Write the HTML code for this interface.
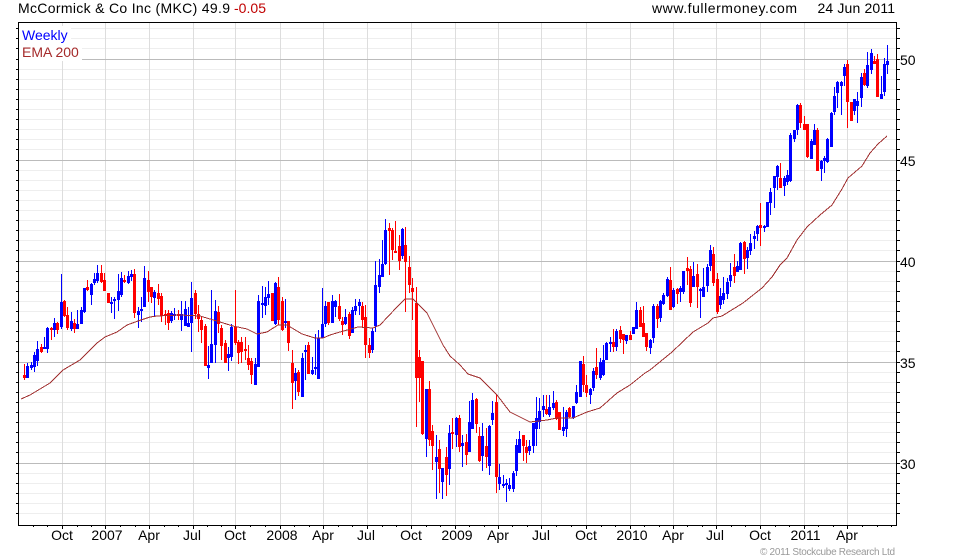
<!DOCTYPE html>
<html><head><meta charset="utf-8"><style>
html,body{margin:0;padding:0;background:#fff;width:980px;height:560px;overflow:hidden}
svg{display:block}
text{font-family:"Liberation Sans",Arial,sans-serif;font-size:14px;fill:#000}
</style></head><body>
<svg width="980" height="560" viewBox="0 0 980 560" xmlns="http://www.w3.org/2000/svg">
<rect width="980" height="560" fill="#fff"/>
<g shape-rendering="crispEdges" fill="none">
<path stroke="#eee" d="M19 28.5H896M19 38.5H896M19 48.5H896M19 69.5H896M19 79.5H896M19 89.5H896M19 99.5H896M19 109.5H896M19 119.5H896M19 129.5H896M19 139.5H896M19 149.5H896M19 170.5H896M19 180.5H896M19 190.5H896M19 200.5H896M19 210.5H896M19 220.5H896M19 230.5H896M19 240.5H896M19 250.5H896M19 271.5H896M19 281.5H896M19 291.5H896M19 301.5H896M19 311.5H896M19 321.5H896M19 331.5H896M19 341.5H896M19 351.5H896M19 372.5H896M19 382.5H896M19 392.5H896M19 402.5H896M19 412.5H896M19 422.5H896M19 432.5H896M19 442.5H896M19 452.5H896M19 473.5H896M19 483.5H896M19 493.5H896M19 503.5H896M19 513.5H896"/>
<path stroke="#ddd" d="M62.5 23V525M105.5 23V525M149.5 23V525M193.5 23V525M235.5 23V525M280.5 23V525M323.5 23V525M367.5 23V525M411.5 23V525M455.5 23V525M498.5 23V525M541.5 23V525M586.5 23V525M630.5 23V525M673.5 23V525M716.5 23V525M760.5 23V525M804.5 23V525M847.5 23V525"/>
<path stroke="#bbb" d="M19 59.5H896M19 160.5H896M19 261.5H896M19 362.5H896M19 463.5H896"/>
<path stroke="#000" d="M18.5 22V526M896.5 22V526M18 22.5H897M18 525.5H897"/>
<path stroke="#000" d="M16 28.5H18M16 38.5H18M16 48.5H18M16 59.5H18M16 69.5H18M16 79.5H18M16 89.5H18M16 99.5H18M16 109.5H18M16 119.5H18M16 129.5H18M16 139.5H18M16 149.5H18M16 160.5H18M16 170.5H18M16 180.5H18M16 190.5H18M16 200.5H18M16 210.5H18M16 220.5H18M16 230.5H18M16 240.5H18M16 250.5H18M16 261.5H18M16 271.5H18M16 281.5H18M16 291.5H18M16 301.5H18M16 311.5H18M16 321.5H18M16 331.5H18M16 341.5H18M16 351.5H18M16 362.5H18M16 372.5H18M16 382.5H18M16 392.5H18M16 402.5H18M16 412.5H18M16 422.5H18M16 432.5H18M16 442.5H18M16 452.5H18M16 463.5H18M16 473.5H18M16 483.5H18M16 493.5H18M16 503.5H18M16 513.5H18"/>
<path stroke="#000" d="M897 28.5H900M897 38.5H900M897 48.5H900M897 59.5H900M897 69.5H900M897 79.5H900M897 89.5H900M897 99.5H900M897 109.5H900M897 119.5H900M897 129.5H900M897 139.5H900M897 149.5H900M897 160.5H900M897 170.5H900M897 180.5H900M897 190.5H900M897 200.5H900M897 210.5H900M897 220.5H900M897 230.5H900M897 240.5H900M897 250.5H900M897 261.5H900M897 271.5H900M897 281.5H900M897 291.5H900M897 301.5H900M897 311.5H900M897 321.5H900M897 331.5H900M897 341.5H900M897 351.5H900M897 362.5H900M897 372.5H900M897 382.5H900M897 392.5H900M897 402.5H900M897 412.5H900M897 422.5H900M897 432.5H900M897 442.5H900M897 452.5H900M897 463.5H900M897 473.5H900M897 483.5H900M897 493.5H900M897 503.5H900M897 513.5H900"/>
<path stroke="#000" d="M62.5 526V529M105.5 526V529M149.5 526V529M193.5 526V529M235.5 526V529M280.5 526V529M323.5 526V529M367.5 526V529M411.5 526V529M455.5 526V529M498.5 526V529M541.5 526V529M586.5 526V529M630.5 526V529M673.5 526V529M716.5 526V529M760.5 526V529M804.5 526V529M847.5 526V529"/>
<path stroke="#000" d="M33.5 526V527M47.5 526V527M77.5 526V527M91.5 526V527M120.5 526V527M135.5 526V527M164.5 526V527M178.5 526V527M207.5 526V527M221.5 526V527M250.5 526V527M265.5 526V527M294.5 526V527M309.5 526V527M338.5 526V527M352.5 526V527M382.5 526V527M396.5 526V527M426.5 526V527M440.5 526V527M469.5 526V527M484.5 526V527M512.5 526V527M527.5 526V527M556.5 526V527M571.5 526V527M601.5 526V527M615.5 526V527M644.5 526V527M659.5 526V527M687.5 526V527M702.5 526V527M731.5 526V527M745.5 526V527M775.5 526V527M789.5 526V527M818.5 526V527M833.5 526V527M862.5 526V527M877.5 526V527M891.5 526V527"/>
<rect x="19" y="26" width="52" height="18" fill="#fff" stroke="none"/>
<rect x="19" y="44" width="63" height="17" fill="#fff" stroke="none"/>

<path stroke="#f00" stroke-width="1" d="M24.5 364V380M41.5 344V353M51.5 327V340M57.5 322V334M64.5 300V317M67.5 307V330M74.5 319V333M87.5 280V291M101.5 265V283M104.5 273V291M108.5 293V303M124.5 275V283M134.5 269V318M148.5 271V302M151.5 287V303M158.5 284V305M161.5 293V322M165.5 310V325M168.5 310V330M178.5 310V320M195.5 290V319M198.5 305V332M201.5 316V343M205.5 324V366M218.5 306V333M221.5 325V360M225.5 340V363M235.5 290V345M238.5 340V364M241.5 337V363M245.5 337V360M248.5 345V370M251.5 358V384M272.5 297V321M278.5 277V325M282.5 297V331M288.5 321V351M292.5 350V409M298.5 370V396M308.5 342V374M328.5 302V325M339.5 294V321M342.5 317V335M349.5 312V339M362.5 302V328M365.5 305V358M369.5 338V358M389.5 223V275M392.5 228V260M395.5 221V253M399.5 235V270M405.5 227V312M409.5 256V293M412.5 278V320M416.5 287V427M419.5 350V402M422.5 361V435M429.5 381V446M432.5 425V470M439.5 440V493M446.5 447V496M452.5 418V449M459.5 415V452M466.5 434V465M476.5 398V433M479.5 427V462M486.5 428V468M496.5 394V493M523.5 435V461M526.5 440V463M546.5 395V415M556.5 400V420M559.5 412V430M569.5 407V418M583.5 356V392M586.5 375V397M596.5 348V379M613.5 329V352M620.5 326V343M623.5 334V354M630.5 331V340M640.5 307V327M643.5 306V337M646.5 333V351M657.5 304V328M670.5 267V310M677.5 288V304M687.5 257V285M690.5 266V307M697.5 264V308M713.5 247V286M717.5 273V314M734.5 254V283M744.5 241V274M760.5 203V246M780.5 163V188M800.5 103V128M804.5 116V130M807.5 124V158M817.5 128V171M847.5 60V128M851.5 102V121M864.5 69V86M874.5 56V64M877.5 54V97"/>
<path stroke="#f00" stroke-width="3" d="M24.5 375V378M41.5 347V352M51.5 328V330M57.5 323V330M64.5 301V316M67.5 315V328M74.5 323V329M87.5 287V290M101.5 273V282M104.5 280V291M108.5 293V303M124.5 280V282M134.5 274V313M148.5 280V292M151.5 287V297M158.5 293V299M161.5 296V316M165.5 314V316M168.5 313V323M178.5 314V316M195.5 293V314M198.5 314V319M201.5 320V330M205.5 326V366M218.5 312V324M221.5 328V346M225.5 343V363M235.5 327V343M238.5 342V353M241.5 342V352M245.5 349V351M248.5 358V365M251.5 361V375M272.5 293V321M278.5 287V320M282.5 301V330M288.5 321V343M292.5 363V383M298.5 372V392M308.5 345V374M328.5 302V323M339.5 306V319M342.5 321V325M349.5 314V336M362.5 306V320M365.5 317V345M369.5 345V353M389.5 228V231M392.5 230V250M395.5 251V253M399.5 246V261M405.5 245V262M409.5 267V285M412.5 288V292M416.5 303V378M419.5 357V378M422.5 361V434M429.5 389V440M432.5 431V446M439.5 449V469M446.5 457V475M452.5 432V434M459.5 418V447M466.5 442V455M476.5 399V424M479.5 436V461M486.5 446V457M496.5 402V477M523.5 435V446M526.5 447V453M546.5 409V414M556.5 402V419M559.5 412V430M569.5 408V417M583.5 364V385M586.5 385V393M596.5 367V375M613.5 342V347M620.5 330V339M623.5 334V340M630.5 335V340M640.5 310V327M643.5 323V337M646.5 333V347M657.5 306V319M670.5 280V310M677.5 289V294M687.5 268V271M690.5 269V303M697.5 274V287M713.5 254V283M717.5 279V312M734.5 267V276M744.5 242V259M760.5 225V228M780.5 178V188M800.5 105V123M804.5 124V130M807.5 124V157M817.5 130V171M847.5 64V102M851.5 102V121M864.5 73V85M874.5 61V64M877.5 59V97"/>

<path stroke="#00f" stroke-width="1" d="M27.5 363V378M31.5 362V370M34.5 352V372M37.5 341V366M44.5 337V349M47.5 327V353M54.5 318V337M61.5 274V329M71.5 312V331M77.5 310V329M81.5 307V324M84.5 288V313M91.5 283V305M94.5 273V285M97.5 265V283M111.5 297V313M114.5 297V319M118.5 274V311M121.5 272V297M128.5 271V284M131.5 270V281M138.5 307V328M141.5 297V322M144.5 266V307M154.5 290V316M171.5 311V323M174.5 308V320M181.5 301V331M185.5 301V326M188.5 307V327M191.5 282V352M208.5 346V379M211.5 290V363M215.5 300V363M228.5 347V371M231.5 324V361M255.5 358V385M258.5 295V367M262.5 286V318M265.5 287V315M268.5 281V305M275.5 282V325M285.5 299V328M295.5 368V400M302.5 353V397M305.5 345V380M312.5 357V375M315.5 334V375M318.5 330V379M322.5 288V338M325.5 301V327M332.5 295V323M335.5 300V317M345.5 309V325M352.5 307V333M355.5 299V315M359.5 299V315M372.5 328V353M375.5 261V332M379.5 259V293M382.5 240V277M385.5 219V265M402.5 228V259M426.5 389V457M436.5 435V499M442.5 468V499M449.5 425V485M456.5 417V447M462.5 435V467M469.5 401V452M472.5 393V429M482.5 423V471M489.5 425V475M492.5 401V425M499.5 464V490M503.5 475V488M506.5 479V502M509.5 478V491M513.5 471V492M516.5 439V476M519.5 431V453M529.5 440V455M533.5 423V453M536.5 397V446M539.5 398V429M543.5 395V417M549.5 395V417M553.5 391V410M563.5 407V436M566.5 410V437M573.5 406V419M576.5 385V404M580.5 361V397M590.5 388V404M593.5 368V391M600.5 358V380M603.5 345V376M606.5 342V360M610.5 337V352M616.5 329V351M626.5 335V344M633.5 327V334M636.5 302V329M650.5 339V354M653.5 304V343M660.5 300V322M663.5 293V305M667.5 277V297M673.5 288V308M680.5 286V302M683.5 271V294M693.5 262V287M700.5 288V318M703.5 268V297M707.5 264V292M710.5 245V271M720.5 288V309M723.5 277V304M727.5 278V299M730.5 263V287M737.5 261V272M740.5 242V270M747.5 247V269M750.5 234V255M754.5 231V249M757.5 225V241M764.5 225V232M767.5 202V227M770.5 188V215M774.5 176V208M777.5 165V190M784.5 176V196M787.5 170V185M790.5 133V182M794.5 130V142M797.5 104V135M811.5 139V159M814.5 124V145M821.5 160V181M824.5 156V173M827.5 138V163M831.5 112V147M834.5 87V115M837.5 81V108M841.5 81V115M844.5 64V86M854.5 99V115M857.5 92V123M861.5 73V107M867.5 52V88M871.5 49V74M881.5 76V99M884.5 58V96M887.5 45V74"/>
<path stroke="#00f" stroke-width="3" d="M27.5 366V378M31.5 365V368M34.5 355V367M37.5 349V361M44.5 347V349M47.5 328V349M54.5 323V330M61.5 302V327M71.5 321V329M77.5 324V329M81.5 310V324M84.5 288V312M91.5 284V295M94.5 279V283M97.5 273V281M111.5 302V304M114.5 299V301M118.5 291V300M121.5 278V295M128.5 276V283M131.5 274V277M138.5 311V315M141.5 309V311M144.5 278V307M154.5 292V298M171.5 313V321M174.5 314V316M181.5 314V320M185.5 309V326M188.5 323V327M191.5 298V323M208.5 365V368M211.5 344V363M215.5 311V345M228.5 354V358M231.5 327V357M255.5 364V385M258.5 301V367M262.5 303V305M265.5 297V306M268.5 294V298M275.5 283V324M285.5 321V323M295.5 373V381M302.5 358V397M305.5 350V352M312.5 370V374M315.5 367V369M318.5 338V379M322.5 324V338M325.5 306V324M332.5 301V323M335.5 301V307M345.5 317V324M352.5 310V333M355.5 306V311M359.5 302V306M372.5 331V350M375.5 285V326M379.5 275V287M382.5 264V277M385.5 230V264M402.5 229V256M426.5 389V439M436.5 457V462M442.5 468V482M449.5 433V469M456.5 418V435M462.5 443V446M469.5 422V452M472.5 400V429M482.5 436V456M489.5 426V466M492.5 413V420M499.5 477V484M503.5 484V486M506.5 483V485M509.5 485V489M513.5 473V489M516.5 445V471M519.5 439V453M529.5 446V451M533.5 423V446M536.5 418V429M539.5 411V422M543.5 406V410M549.5 407V415M553.5 403V408M563.5 427V431M566.5 412V429M573.5 406V418M576.5 392V403M580.5 361V397M590.5 389V395M593.5 371V388M600.5 362V378M603.5 360V375M606.5 343V360M610.5 342V344M616.5 331V347M626.5 335V341M633.5 327V334M636.5 310V329M650.5 340V348M653.5 306V338M660.5 301V318M663.5 295V304M667.5 279V296M673.5 290V307M680.5 288V292M683.5 271V292M693.5 276V287M700.5 289V291M703.5 287V297M707.5 267V286M710.5 250V266M720.5 296V305M723.5 293V300M727.5 282V294M730.5 275V281M737.5 266V272M740.5 243V270M747.5 250V258M750.5 243V251M754.5 236V239M757.5 226V234M764.5 226V228M767.5 202V227M770.5 192V203M774.5 176V188M777.5 166V177M784.5 178V186M787.5 175V182M790.5 135V181M794.5 130V139M797.5 105V130M811.5 141V159M814.5 130V145M821.5 161V169M824.5 158V161M827.5 139V162M831.5 113V147M834.5 96V112M837.5 82V93M841.5 82V86M844.5 67V76M854.5 99V111M857.5 101V106M861.5 77V98M867.5 65V86M871.5 53V70M881.5 94V99M884.5 64V92M887.5 61V65"/>
</g>
<polyline fill="none" stroke="#a03030" stroke-width="1" shape-rendering="crispEdges" points="21,399 30,395 40,389 50,383 58,375 63,370 80,360 97,343 105,337 117,332 127,325 138,321 150,317 157,316 180,315 200,316 210,319 220,322 233,326 247,329 257,334 267,332 278,325 287,325 302,334 315,338 323,338 330,335 340,332 358,327 373,328 380,325 397,307 405,299 413,299 427,313 443,345 450,356 460,365 468,374 480,378 497,395 510,412 530,422 547,420 557,418 573,418 587,412 600,408 617,393 630,385 645,373 650,370 672,352 693,332 708,323 713,318 722,316 743,303 762,288 772,277 780,265 787,258 797,240 807,227 820,215 832,205 842,189 848,178 862,166 870,153 878,144 887,136"/>

<text x="18" y="13" textLength="212">McCormick &amp; Co Inc (MKC) 49.9</text>
<text x="234" y="13" textLength="32" style="fill:#c00000">-0.05</text>
<text x="652" y="13" textLength="145">www.fullermoney.com</text>
<text x="817.5" y="13" textLength="77.5">24 Jun 2011</text>
<text x="22" y="40" style="fill:#00f">Weekly</text>
<text x="22" y="57" style="fill:#a52a2a">EMA 200</text>
<text x="900" y="65">50</text><text x="900" y="166">45</text><text x="900" y="267">40</text><text x="900" y="368">35</text><text x="900" y="469">30</text>
<g text-anchor="middle">
<text x="62" y="540">Oct</text><text x="107" y="540">2007</text><text x="149" y="540">Apr</text><text x="192" y="540">Jul</text><text x="235" y="540">Oct</text><text x="282" y="540">2008</text><text x="323" y="540">Apr</text><text x="366" y="540">Jul</text><text x="411" y="540">Oct</text><text x="457" y="540">2009</text><text x="498" y="540">Apr</text><text x="541" y="540">Jul</text><text x="586" y="540">Oct</text><text x="632" y="540">2010</text><text x="673" y="540">Apr</text><text x="715" y="540">Jul</text><text x="760" y="540">Oct</text><text x="805.5" y="540">2011</text><text x="847" y="540">Apr</text>
</g>
<text x="760" y="555" textLength="135" style="fill:#999;font-size:10px">© 2011 Stockcube Research Ltd</text>
</svg>
</body></html>
